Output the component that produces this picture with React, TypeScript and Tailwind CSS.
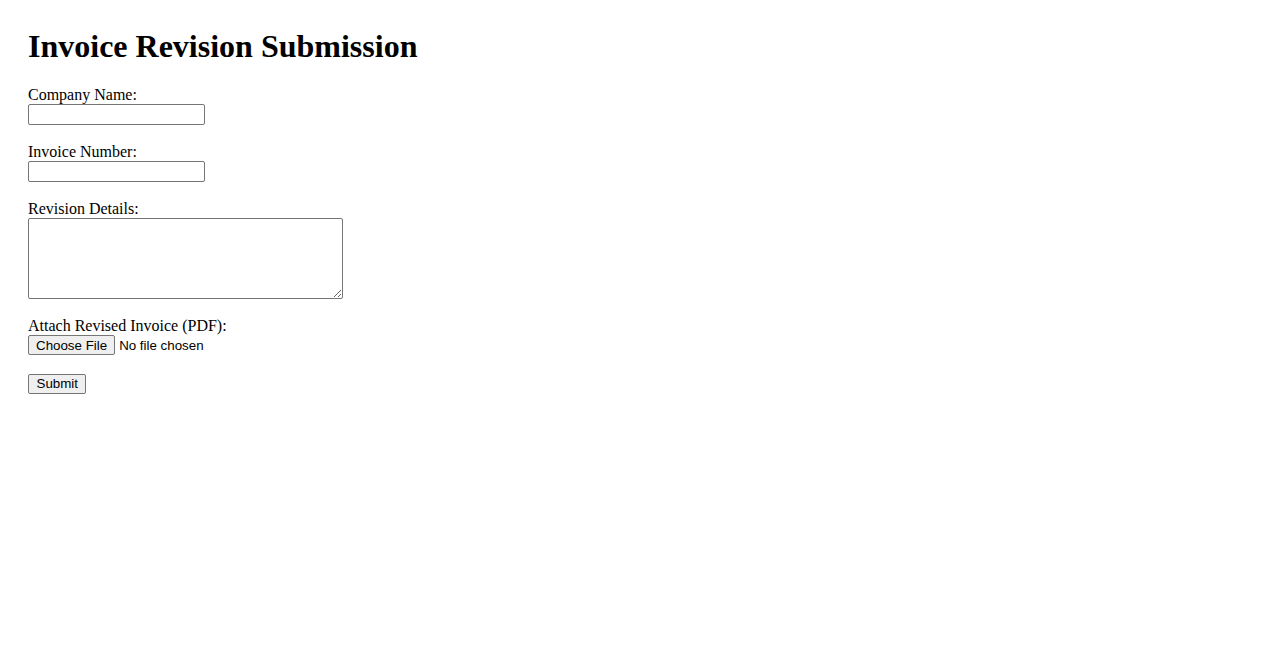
export default function App() {
  const field =
    "block w-[177px] h-[21px] border border-[#767676] rounded-[2px] px-[2px] bg-white font-['Liberation_Sans',sans-serif] text-[13.33px]";
  const label = "block leading-[18px] text-base";

  return (
    <div className="min-h-[650px] bg-white p-[28px] font-['Liberation_Serif',serif] text-black">
      <h1 className="text-[32px] font-bold leading-[37px] mb-[21px]">
        Invoice Revision Submission
      </h1>
      <form onSubmit={(e) => e.preventDefault()}>
        <label className={label}>Company Name:</label>
        <input type="text" className={`${field} mb-[18px]`} />

        <label className={label}>Invoice Number:</label>
        <input type="text" className={`${field} mb-[18px]`} />

        <label className={label}>Revision Details:</label>
        <textarea className="block w-[315px] h-[81px] border border-[#767676] rounded-[2px] bg-white mb-[18px] font-['Liberation_Mono',monospace] text-[13.33px]" />

        <label className={label}>Attach Revised Invoice (PDF):</label>
        <input
          type="file"
          accept="application/pdf"
          className="block h-[20px] mb-[19px] font-['Liberation_Sans',sans-serif] text-[13.33px] leading-[20px] file:h-[20px] file:px-[7px] file:mr-[4px] file:bg-[#efefef] file:border file:border-[#767676] file:rounded-[2px] file:font-['Liberation_Sans',sans-serif] file:text-[13.33px] file:text-black"
        />

        <button
          type="submit"
          className="block h-[20px] mt-[1px] px-[7.5px] bg-[#efefef] border border-[#767676] rounded-[2px] font-['Liberation_Sans',sans-serif] text-[13.33px] leading-[18px]"
        >
          Submit
        </button>
      </form>
    </div>
  );
}
